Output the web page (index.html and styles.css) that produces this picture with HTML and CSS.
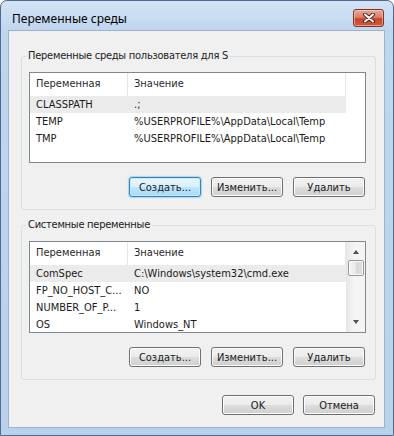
FILE: index.html
```html
<!DOCTYPE html>
<html lang="ru">
<head>
  <meta charset="UTF-8" />
  <title>Переменные среды</title>
  <link rel="stylesheet" href="styles.css">
</head>
<body>

  <div class="window">
    <div class="titlebar">
      <span class="title">Переменные среды</span>
      <button class="close" title="Закрыть">
        <svg width="14" height="10" viewBox="0 0 14 10">
          <path d="M3 1.5 L11 8.5 M11 1.5 L3 8.5" stroke="#5a2418" stroke-width="4" stroke-linecap="round" fill="none"/>
          <path d="M3 1.5 L11 8.5 M11 1.5 L3 8.5" stroke="#ffffff" stroke-width="2" stroke-linecap="round" fill="none"/>
        </svg>
      </button>
    </div>

    <div class="client">

      <fieldset class="group">
        <legend>Переменные среды пользователя для S</legend>
        <div class="list list-user">
          <div class="list-head">
            <span class="col-name">Переменная</span>
            <span class="col-value">Значение</span>
            <span class="col-rest"></span>
          </div>
          <div class="row selected"><span class="col-name">CLASSPATH</span><span class="col-value">.;</span></div>
          <div class="row"><span class="col-name">TEMP</span><span class="col-value">%USERPROFILE%\AppData\Local\Temp</span></div>
          <div class="row"><span class="col-name">TMP</span><span class="col-value">%USERPROFILE%\AppData\Local\Temp</span></div>
        </div>
        <div class="actions">
          <button class="btn btn-focus">Создать...</button>
          <button class="btn">Изменить...</button>
          <button class="btn">Удалить</button>
        </div>
      </fieldset>

      <fieldset class="group group-system">
        <legend>Системные переменные</legend>
        <div class="list list-system">
          <div class="list-body">
            <div class="list-head">
              <span class="col-name">Переменная</span>
              <span class="col-value">Значение</span>
            </div>
            <div class="row selected"><span class="col-name">ComSpec</span><span class="col-value">C:\Windows\system32\cmd.exe</span></div>
            <div class="row"><span class="col-name">FP_NO_HOST_C...</span><span class="col-value">NO</span></div>
            <div class="row"><span class="col-name">NUMBER_OF_P...</span><span class="col-value">1</span></div>
            <div class="row"><span class="col-name">OS</span><span class="col-value">Windows_NT</span></div>
          </div>
          <div class="scrollbar">
            <span class="arrow arrow-up"></span>
            <span class="thumb"></span>
            <span class="arrow arrow-down"></span>
          </div>
        </div>
        <div class="actions">
          <button class="btn">Создать...</button>
          <button class="btn">Изменить...</button>
          <button class="btn">Удалить</button>
        </div>
      </fieldset>

      <div class="dialog-actions">
        <button class="btn">OK</button>
        <button class="btn">Отмена</button>
      </div>

    </div>
  </div>

</body>
</html>
```

FILE: styles.css
```css
* {
  box-sizing: border-box;
}

body {
  margin: 0;
  background: #ffffff;
  font-family: "DejaVu Sans Condensed", "Liberation Sans", sans-serif;
  font-size: 11px;
  color: #1a1a1a;
}

.window {
  width: 394px;
  height: 436px;
  border: 1px solid #4f6a8c;
  border-radius: 7px 7px 0 0;
  background: linear-gradient(#d3e3f5 0, #bfd6ef 30px, #b9d1eb 100%);
  overflow: hidden;
}

.titlebar {
  height: 29px;
  display: flex;
  align-items: flex-start;
  justify-content: space-between;
  padding: 8px 9px 0 11px;
}

.title {
  font-family: "Noto Sans", "Liberation Sans", sans-serif;
  font-size: 12px;
  line-height: 22px;
  margin-top: -1px;
  color: #000;
}

.close {
  width: 31px;
  height: 18px;
  padding: 0;
  border: 1px solid #7e3426;
  border-radius: 3px;
  background: linear-gradient(#e9a99a 0%, #dc7f6a 45%, #c8462c 55%, #cf5a3c 100%);
  box-shadow: inset 0 0 0 1px rgba(255, 220, 210, 0.5);
  display: flex;
  align-items: center;
  justify-content: center;
}

.client {
  width: 377px;
  height: 398px;
  margin-left: 7px;
  border: 1px solid #9db3cc;
  background: #f0f0f0;
  padding-top: 18px;
}

.group {
  width: 355px;
  margin: 0 0 0 12px;
  padding: 9px 9px 12px 7px;
  border: 1px solid #d5dfe5;
  border-radius: 3px;
}

.group-system {
  margin-top: 8px;
}

.group legend {
  line-height: 14px;
  padding: 0 2px;
  margin-left: -3px;
  letter-spacing: -0.25px;
}

.list {
  height: 91px;
  border: 1px solid #828790;
  background: #fff;
  overflow: hidden;
}

.list-system {
  height: 92px;
  display: flex;
}

.list-body {
  width: 316px;
}

.list-head {
  display: flex;
  height: 23px;
  line-height: 22px;
  color: #2a2a2a;
}

.list-head span {
  border-right: 1px solid #e3e6ea;
}

.row {
  display: flex;
  width: 316px;
  height: 17px;
  line-height: 17px;
}

.row.selected {
  background: #ebebeb;
}

.col-name {
  width: 98px;
  padding-left: 6px;
  white-space: nowrap;
  overflow: hidden;
}

.col-value {
  width: 218px;
  padding-left: 6px;
  white-space: nowrap;
  overflow: hidden;
}

.col-rest {
  flex: 1;
}

.list-head .col-rest {
  border-right: none;
}

.scrollbar {
  width: 19px;
  border-left: 1px solid #e6e6e6;
  background: linear-gradient(90deg, #e9e9e9, #f4f4f4 40%, #f4f4f4);
  display: flex;
  flex-direction: column;
  align-items: center;
  padding: 0 1px;
}

.arrow {
  width: 0;
  height: 0;
  border-left: 3px solid transparent;
  border-right: 3px solid transparent;
}

.arrow-up {
  margin-top: 8px;
  border-bottom: 4px solid #505050;
}

.arrow-down {
  margin-top: auto;
  margin-bottom: 8px;
  border-top: 4px solid #505050;
}

.thumb {
  width: 16px;
  height: 16px;
  margin-top: 6px;
  border: 1px solid #979797;
  border-radius: 2px;
  background: linear-gradient(90deg, #f5f5f5, #e6e6e6 50%, #d9d9d9 50%, #dedede);
  box-shadow: inset 0 0 0 1px #fafafa;
}

.actions {
  display: flex;
  justify-content: flex-end;
  gap: 10px;
  margin-top: 14px;
  padding-right: 1px;
}

.btn {
  width: 72px;
  height: 20px;
  padding: 0;
  border: 1px solid #707070;
  border-radius: 3px;
  background: linear-gradient(#f2f2f2 0%, #ebebeb 50%, #dddddd 50%, #cfcfcf 100%);
  box-shadow: inset 0 0 0 1px #fcfcfc;
  font-family: inherit;
  font-size: 11px;
  color: #1a1a1a;
  line-height: 17px;
}

.btn-focus {
  border-color: #3c7fb1;
  background: linear-gradient(#eaf6fd 0%, #d9f0fc 50%, #bee6fd 50%, #a7d9f5 100%);
  box-shadow: inset 0 0 0 1px #c6e9fc, 0 0 1px 1px #a6d6f3;
}

.dialog-actions {
  display: flex;
  justify-content: flex-end;
  gap: 9px;
  margin-top: 15px;
  margin-right: 9px;
}
```
